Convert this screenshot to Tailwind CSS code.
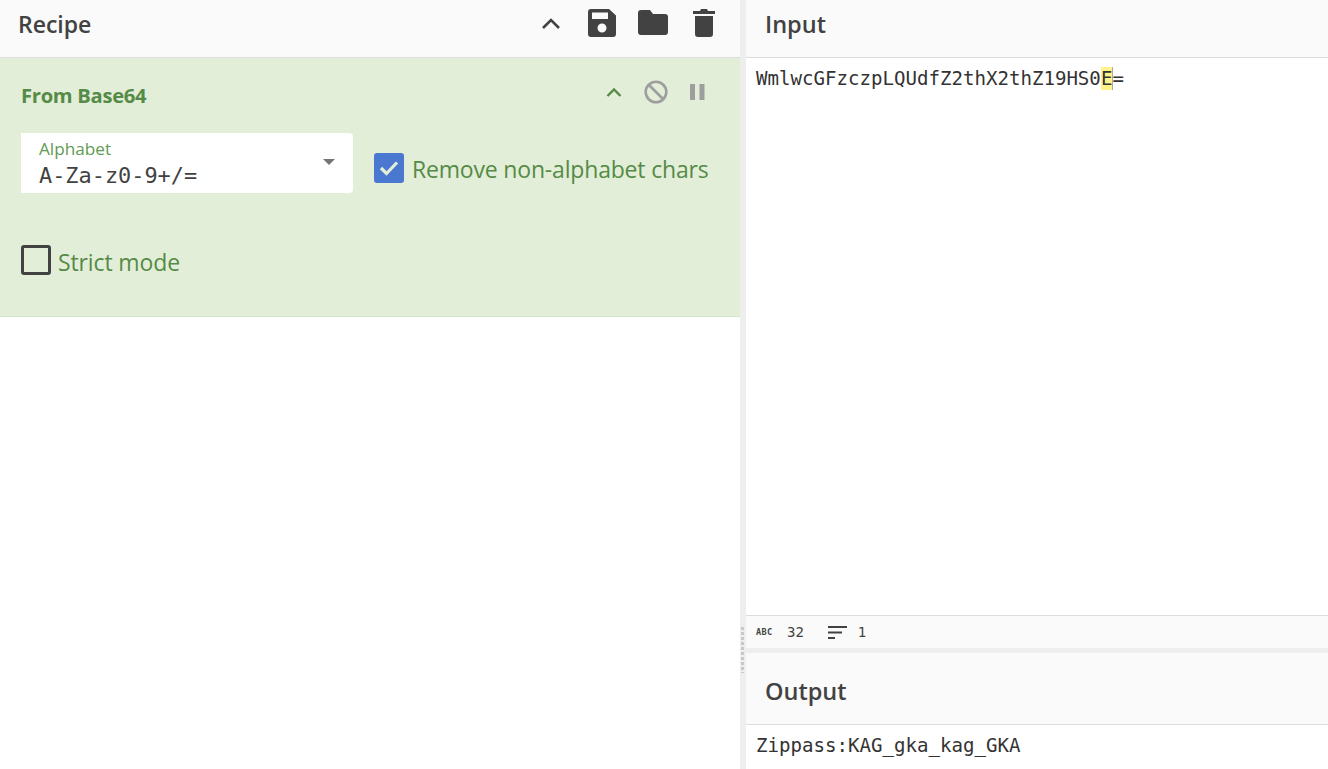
<!DOCTYPE html>
<html lang="en">
<head>
  <meta charset="UTF-8" />
  <title>CyberChef</title>
  <script src="https://cdn.jsdelivr.net/npm/@tailwindcss/browser@4"></script>
</head>
<body class="bg-white overflow-hidden font-['Open_Sans',sans-serif]">
  <div class="flex w-[1328px] h-[769px] overflow-hidden">
    <!-- recipe column -->
    <div class="w-[740px] flex flex-col shrink-0">
      <div class="h-[58px] shrink-0 bg-[#fafafa] border-b border-[#dddddd] flex items-center pl-[18px] pb-[8px]">
        <h1 class="text-[23px] font-semibold text-[#424242]">Recipe</h1>
        <div class="ml-auto flex items-center text-[#424242] -mt-[4px]">
          <svg class="w-[22px] h-[14px] mr-[26px]" viewBox="0 0 22 14" fill="none" stroke="currentColor" stroke-width="2.6"><path d="M3 12 L11 4 L19 12"/></svg>
          <svg class="w-[28px] h-[28px] mr-[22px]" viewBox="0 0 28 28" fill="currentColor"><path fill-rule="evenodd" d="M3 0H21L28 6.500V25Q28 28 25 28H3Q0 28 0 25V3Q0 0 3 0ZM4 3.500V10H20V3.500ZM14 14.500A4.500 4.500 0 1 0 14 23.500A4.500 4.500 0 1 0 14 14.500Z"/></svg>
          <svg class="w-[30px] h-[25px] mr-[25px]" viewBox="0 0 30 25" fill="currentColor"><path d="M3 0H12L15 4H27Q30 4 30 7V22Q30 25 27 25H3Q0 25 0 22V3Q0 0 3 0Z"/></svg>
          <svg class="w-[22px] h-[28px] mr-[25px]" viewBox="0 0 22 28" fill="currentColor"><path d="M8 0H14L15 2H22V5H0V2H7ZM2 7H20V25Q20 28 17 28H5Q2 28 2 25Z"/></svg>
        </div>
      </div>
      <div class="h-[259px] shrink-0 bg-[#e3eed9] border-b border-[#d6e4c8] px-[21px]">
        <div class="h-[75px] flex items-center">
          <h2 class="text-[20.200px] font-bold text-[#558b46] tracking-[-0.3px]">From Base64</h2>
          <div class="ml-auto flex items-center mr-[14px] mb-[8px]">
            <svg class="w-[16px] h-[10px] mr-[22px]" viewBox="0 0 16 10" fill="none" stroke="#558b46" stroke-width="2.400"><path d="M1.500 9 L8 2.500 L14.500 9"/></svg>
            <svg class="w-[24px] h-[24px] mr-[22px]" viewBox="0 0 24 24" fill="none" stroke="#9e9e9e" stroke-width="2.600"><circle cx="12" cy="12" r="10.300"/><path d="M5 5 L19 19"/></svg>
            <svg class="w-[15px] h-[16px]" viewBox="0 0 15 16" fill="#9e9e9e"><rect x="0" y="0" width="5" height="16"/><rect x="9.500" y="0" width="5" height="16"/></svg>
          </div>
        </div>
        <div class="flex items-start">
          <div class="relative w-[332px] h-[60px] bg-white rounded-r-[4px] shrink-0 pl-[18px]">
            <div class="pt-[4px] text-[17.200px] leading-[23px] text-[#619a51]">Alphabet</div>
            <div class="font-['DejaVu_Sans_Mono',monospace] text-[21.900px] leading-[26px] text-[#424242] mt-[3px]">A-Za-z0-9+/=</div>
            <div class="absolute left-[302px] top-[26px] w-0 h-0 border-x-[6px] border-x-transparent border-t-[6px] border-t-[#757575]"></div>
          </div>
          <label class="flex items-center ml-[21px] mt-[20px] h-[30px]">
            <span class="w-[30px] h-[30px] rounded-[3px] bg-[#4a78d0] flex items-center justify-center shrink-0">
              <svg class="w-[20px] h-[16px]" viewBox="0 0 20 16" fill="none" stroke="#e3eed9" stroke-width="3.200"><path d="M2 8 L7.500 13.500 L18 2.500"/></svg>
            </span>
            <span class="ml-[8px] text-[23px] text-[#558b46] whitespace-nowrap tracking-[-0.18px] pt-[3px]">Remove non-alphabet chars</span>
          </label>
        </div>
        <label class="flex items-center mt-[52px] h-[30px]">
          <span class="w-[30px] h-[30px] rounded-[3px] border-[3px] border-[#424242] shrink-0"></span>
          <span class="ml-[7px] text-[23px] text-[#558b46] tracking-[-0.12px] pt-[5px]">Strict mode</span>
        </label>
      </div>
    </div>

    <!-- gutter -->
    <div class="relative w-[6px] bg-[#eeeeee] shrink-0">
      <div class="absolute left-[1px] top-[627px] h-[46px] w-[3px] bg-[repeating-linear-gradient(to_bottom,#c8c8c8_0,#c8c8c8_3px,transparent_3px,transparent_5px)]"></div>
    </div>

    <!-- input and output -->
    <div class="flex-1 flex flex-col min-w-0">
      <div class="h-[58px] shrink-0 bg-[#fafafa] border-b border-[#dddddd] flex items-center pl-[19px] pb-[7px]">
        <h1 class="text-[23.500px] font-semibold text-[#424242]">Input</h1>
      </div>
      <div class="h-[557px] shrink-0 pl-[10px] pt-[8px] font-['DejaVu_Sans_Mono',monospace] text-[19.100px] leading-[26px] text-[#333333] whitespace-pre">WmlwcGFzczpLQUdfZ2thX2thZ19HS0<span class="bg-[#fff38a] border-r border-[#aaaaaa] -mr-px">E</span>=</div>
      <div class="h-[33px] shrink-0 bg-[#fafafa] border-t border-[#dddddd] flex items-center pl-[10px] font-['DejaVu_Sans_Mono',monospace] text-[14px] text-[#424242]">
        <span class="text-[8.500px] font-bold tracking-[0.4px] w-[20px]">ABC</span>
        <span class="ml-[11px]">32</span>
        <svg class="w-[19px] h-[13px] ml-[24px]" viewBox="0 0 19 13" fill="#424242"><rect y="0" width="19" height="2"/><rect y="5.500" width="14" height="2"/><rect y="11" width="7" height="2"/></svg>
        <span class="ml-[11px]">1</span>
      </div>
      <div class="h-[5px] shrink-0 bg-[#eeeeee]"></div>
      <div class="h-[72px] shrink-0 bg-[#fafafa] border-b border-[#dddddd] flex items-center pl-[19px] pt-[7px]">
        <h1 class="text-[23.500px] font-semibold text-[#424242]">Output</h1>
      </div>
      <div class="pl-[10px] pt-[8px] font-['DejaVu_Sans_Mono',monospace] text-[19.100px] leading-[26px] text-[#333333]">Zippass:KAG_gka_kag_GKA</div>
    </div>
  </div>
</body>
</html>
